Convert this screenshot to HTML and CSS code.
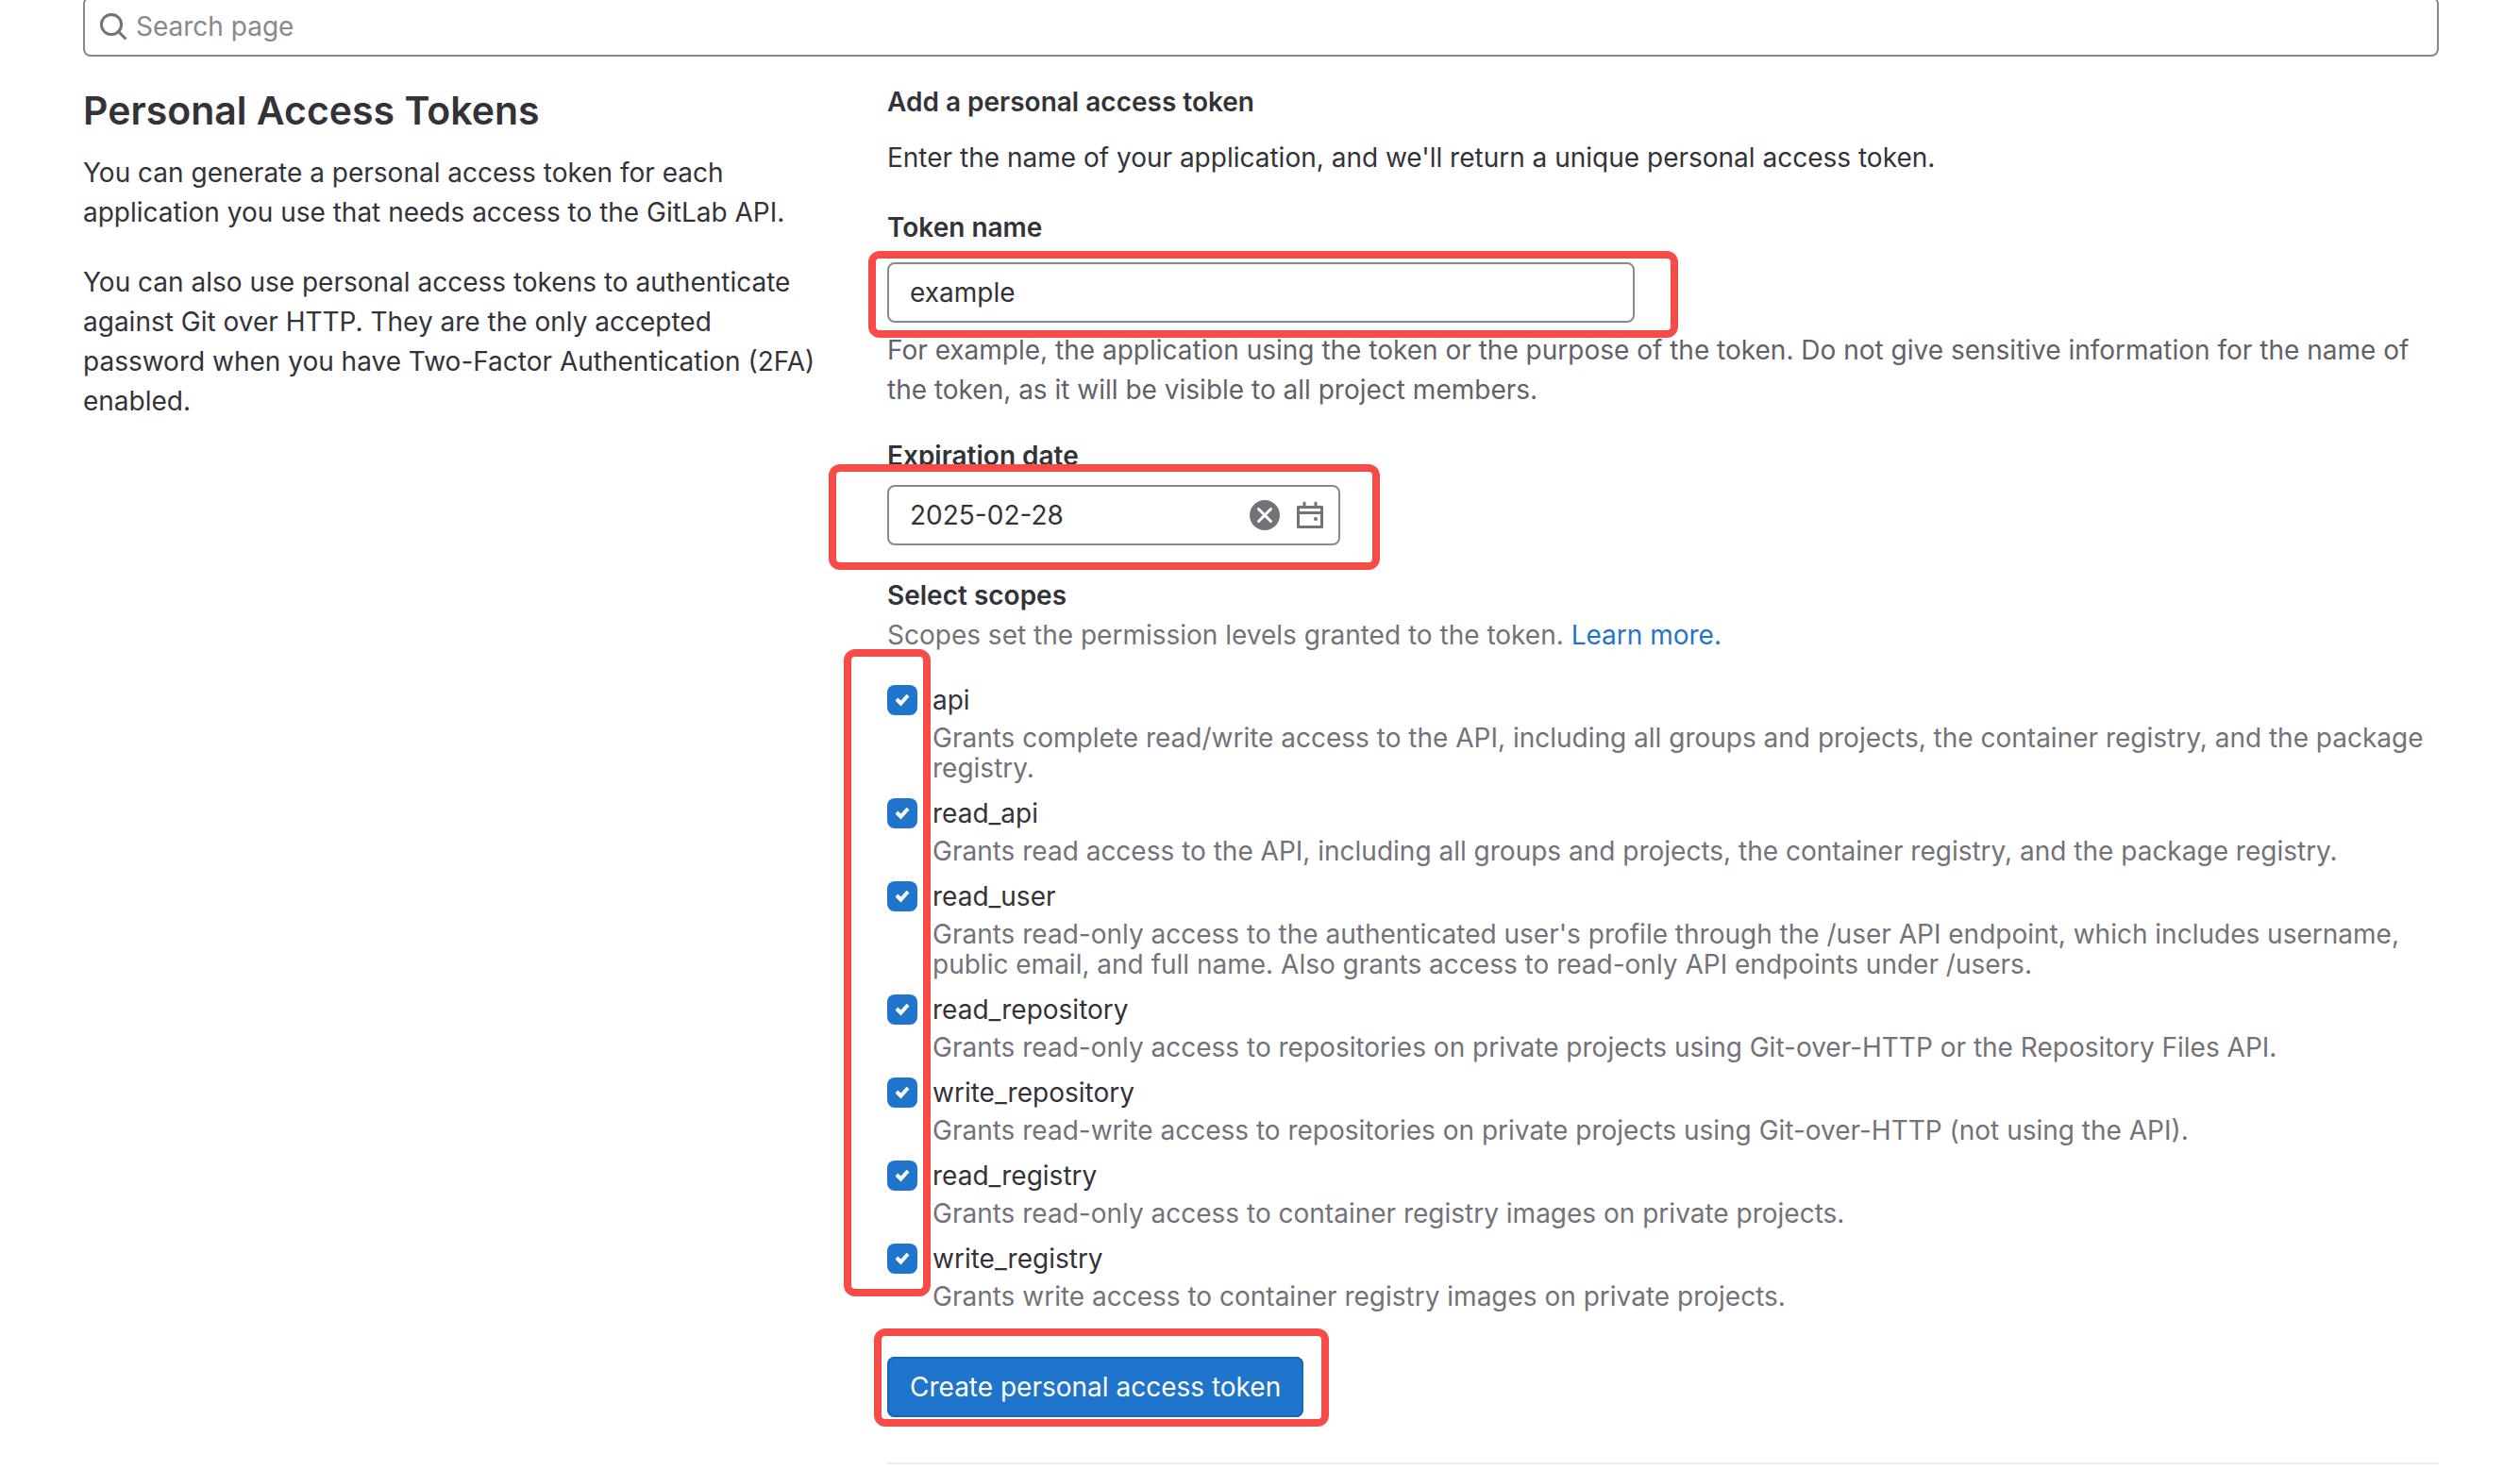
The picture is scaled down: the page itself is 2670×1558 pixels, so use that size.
FILE: index.html
```html
<!DOCTYPE html>
<html lang="en">
<head>
<meta charset="utf-8">
<meta name="viewport" content="width=device-width, initial-scale=1">
<title>Personal Access Tokens</title>
<link rel="stylesheet" href="styles.css">
</head>
<body>
<main class="page">
  <form class="search" role="search">
    <svg class="search-icon" viewBox="0 0 28 28" aria-hidden="true"><circle cx="12" cy="12" r="10.6"/><path d="M19.500 19.500 26.500 26.500"/></svg>
    <input class="search-input" type="search" placeholder="Search page" aria-label="Search page">
  </form>

  <div class="settings">
    <section class="intro">
      <h1 class="title">Personal Access Tokens</h1>
      <p class="text">You can generate a personal access token for each application you use that needs access to the GitLab API.</p>
      <p class="text">You can also use personal access tokens to authenticate against Git over HTTP. They are the only accepted password when you have Two-Factor Authentication (2FA) enabled.</p>
    </section>

    <form class="token-form">
      <h2 class="form-title">Add a personal access token</h2>
      <p class="form-lead">Enter the name of your application, and we'll return a unique personal access token.</p>

      <div class="field">
        <label class="label" for="token-name">Token name</label>
        <div class="name-box">
          <input class="control" id="token-name" type="text" value="example">
          <span class="mark mark-name"></span>
        </div>
        <p class="help">For example, the application using the token or the purpose of the token. Do not give sensitive information for the name of the token, as it will be visible to all project members.</p>
      </div>

      <div class="field field-date">
        <label class="label" for="expires">Expiration date</label>
        <div class="date-box">
          <input class="control" id="expires" type="text" value="2025-02-28">
          <div class="date-actions">
            <button class="icon-button" type="button" aria-label="Clear date"><svg viewBox="0 0 32 32"><circle cx="16" cy="16" r="16"/><path class="cross" d="M9.500 9.500l13 13M22.500 9.500l-13 13"/></svg></button>
            <button class="icon-button" type="button" aria-label="Open calendar"><svg viewBox="0 0 32 32"><path class="outline" d="M3.500 7.500h25v21h-25zM3.500 13.500h25M10 3v4M22 3v4"/><circle cx="22" cy="20" r="2"/></svg></button>
          </div>
          <span class="mark mark-date"></span>
        </div>
      </div>

      <h3 class="label">Select scopes</h3>
      <p class="scopes-lead">Scopes set the permission levels granted to the token. <a class="link" href="#scopes">Learn more.</a></p>

      <div class="scopes" id="scopes">
        <div class="scope">
          <input class="check" type="checkbox" id="api" checked>
          <label class="scope-name" for="api">api</label>
          <p class="scope-help">Grants complete read/write access to the API, including all groups and projects, the container registry, and the package registry.</p>
        </div>
        <div class="scope">
          <input class="check" type="checkbox" id="read_api" checked>
          <label class="scope-name" for="read_api">read_api</label>
          <p class="scope-help">Grants read access to the API, including all groups and projects, the container registry, and the package registry.</p>
        </div>
        <div class="scope">
          <input class="check" type="checkbox" id="read_user" checked>
          <label class="scope-name" for="read_user">read_user</label>
          <p class="scope-help">Grants read-only access to the authenticated user's profile through the /user API endpoint, which includes username, public email, and full name. Also grants access to read-only API endpoints under /users.</p>
        </div>
        <div class="scope">
          <input class="check" type="checkbox" id="read_repository" checked>
          <label class="scope-name" for="read_repository">read_repository</label>
          <p class="scope-help">Grants read-only access to repositories on private projects using Git-over-HTTP or the Repository Files API.</p>
        </div>
        <div class="scope">
          <input class="check" type="checkbox" id="write_repository" checked>
          <label class="scope-name" for="write_repository">write_repository</label>
          <p class="scope-help">Grants read-write access to repositories on private projects using Git-over-HTTP (not using the API).</p>
        </div>
        <div class="scope">
          <input class="check" type="checkbox" id="read_registry" checked>
          <label class="scope-name" for="read_registry">read_registry</label>
          <p class="scope-help">Grants read-only access to container registry images on private projects.</p>
        </div>
        <div class="scope">
          <input class="check" type="checkbox" id="write_registry" checked>
          <label class="scope-name" for="write_registry">write_registry</label>
          <p class="scope-help">Grants write access to container registry images on private projects.</p>
        </div>
        <span class="mark mark-scopes"></span>
      </div>

      <div class="submit-box">
        <button class="submit" type="button">Create personal access token</button>
        <span class="mark mark-submit"></span>
      </div>
      <hr class="rule">
    </form>
  </div>
</main>
</body>
</html>
```
FILE: styles.css
```css
* { box-sizing: border-box; }

body {
  margin: 0;
  background: #fff;
  color: #333238;
  font: 28px/42px Inter, "Noto Sans", sans-serif;
}

h1, h2, h3, p { margin: 0; }
input, button { font: inherit; color: inherit; }

.page {
  padding: 0 86px 6px 88px;
  overflow: hidden;
}

.search {
  display: flex;
  align-items: center;
  gap: 10px;
  height: 64px;
  margin-top: -4px;
  padding: 0 16px;
  border: 2px solid #89888d;
  border-radius: 8px;
}
.search-icon {
  flex: none;
  width: 28px;
  height: 28px;
  fill: none;
  stroke: #737278;
  stroke-width: 3;
  stroke-linecap: round;
}
.search-input {
  flex: 1;
  min-width: 0;
  padding: 0;
  border: 0;
  outline: 0;
  background: none;
}
.search-input::placeholder { color: #89888d; opacity: 1; }

.settings {
  display: grid;
  grid-template-columns: minmax(0, 1fr) minmax(0, 2fr);
  gap: 30px;
  padding-top: 27px;
}

.intro {
  display: flex;
  flex-direction: column;
  gap: 32px;
  padding: 4px 30px 0 0;
}
.title {
  margin-bottom: -13px;
  font-size: 41px;
  font-weight: 600;
  line-height: 52px;
}

.form-title, .label {
  display: block;
  font-size: 28px;
  font-weight: 600;
  line-height: 42px;
}
.form-title { margin-bottom: 17px; }
.form-lead { margin-bottom: 32px; }

.field .label { margin-bottom: 16px; }
.field-date .label { margin-bottom: 10px; }
.field-date { margin: 28px 0 32px; }

.name-box, .date-box, .scopes, .submit-box { position: relative; }
.name-box { width: calc(50% - 30px); }
.date-box { width: 480px; }

.control {
  display: block;
  width: 100%;
  height: 64px;
  padding: 0 22px;
  border: 2px solid #89888d;
  border-radius: 8px;
  background: #fff;
}
.help { padding-top: 8px; color: #626168; }

.date-actions {
  position: absolute;
  inset: 0 16px 0 auto;
  display: flex;
  align-items: center;
  gap: 16px;
}
.icon-button {
  width: 32px;
  height: 32px;
  padding: 0;
  border: 0;
  background: none;
}
.icon-button svg { display: block; fill: #737278; }
.icon-button .cross { fill: none; stroke: #fff; stroke-width: 3; stroke-linecap: round; }
.icon-button .outline { fill: none; stroke: #737278; stroke-width: 3; stroke-linejoin: round; stroke-linecap: round; }

.scopes-lead, .scope-help { color: #737278; }
.link { color: #1f75cb; text-decoration: none; }

.scopes {
  display: flex;
  flex-direction: column;
  gap: 16px;
  padding-top: 32px;
}
.scope {
  display: grid;
  grid-template-columns: 32px minmax(0, 1fr);
  gap: 8px 16px;
  line-height: 32px;
}
.scope-help { grid-column: 2; }
.check {
  appearance: none;
  width: 32px;
  height: 32px;
  margin: 0;
  border-radius: 8px;
}
.check:checked {
  background: #1f75cb url("data:image/svg+xml,%3Csvg xmlns='http://www.w3.org/2000/svg' viewBox='0 0 32 32'%3E%3Cpath d='M10 15l4.500 4.500L22 11' fill='none' stroke='%23fff' stroke-width='4'/%3E%3C/svg%3E");
}

.submit-box { width: max-content; margin: 48px 0; }
.submit {
  display: block;
  height: 64px;
  padding: 0 24px;
  border: 0;
  border-radius: 8px;
  background: #1f75cb;
  box-shadow: inset 0 0 0 2px #1068bf;
  color: #fff;
}

.rule {
  height: 2px;
  margin: 0;
  border: 0;
  background: #ececef;
}

/* Highlight frames drawn over the parts of the form to fill in */
.mark {
  position: absolute;
  border: 8px solid #f74b47;
  border-radius: 12px;
  pointer-events: none;
}
.mark-name { inset: -12px -46px -16px -20px; }
.mark-date { inset: -22px -42px -26px -62px; }
.mark-scopes { inset: -6px auto 16px -46px; width: 92px; }
.mark-submit { inset: -30px -27px -10px -14px; }
```
